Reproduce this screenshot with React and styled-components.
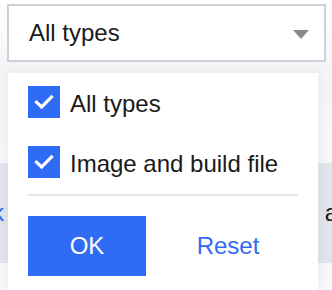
import styled, { createGlobalStyle } from 'styled-components';

const GlobalStyle = createGlobalStyle`
  html, body {
    margin: 0;
    padding: 0;
    background: #f7f8fa;
    font-family: "Liberation Sans", Arial, sans-serif;
    overflow: hidden;
  }
`;

const Page = styled.div`
  width: 332px;
  height: 290px;
  padding: 4px 6px 0 7px;
  box-sizing: border-box;
  position: relative;
  overflow: hidden;
  background: linear-gradient(#ffffff 0px, #f4f5f7 70px, #f7f8fa 160px);
`;

const Select = styled.div`
  height: 58px;
  box-sizing: border-box;
  border: 2px solid #ccd0d9;
  background: #fff;
  display: flex;
  align-items: center;
  justify-content: space-between;
  padding: 0 15px 0 20px;
  font-size: 24px;
  color: #1a1a1a;
`;

const Arrow = styled.span`
  width: 0;
  height: 0;
  border-left: 8px solid transparent;
  border-right: 8px solid transparent;
  border-top: 9px solid #8a8a8a;
  margin-top: 2px;
`;

const Behind = styled.div`
  margin: 101px -6px 0 -7px;
`;

const TableRow = styled.div`
  height: 100px;
  background: #e2e5ec;
  display: flex;
  align-items: center;
  justify-content: space-between;
  font-size: 24px;
  overflow: hidden;
`;

const Cell = styled.span`
  color: ${({ $link }) => ($link ? '#2f6bf5' : '#1a1a1a')};
  margin: ${({ $link }) => ($link ? '0 0 0 -8px' : '0 -6px 0 0')};
`;

const Menu = styled.div`
  position: absolute;
  left: 8px;
  top: 73px;
  width: 310px;
  height: 217px;
  box-sizing: border-box;
  background: #fff;
  box-shadow: 0 0 14px rgba(30, 40, 60, 0.07);
  padding: 13px 20px 0;
`;

const Option = styled.label`
  display: flex;
  align-items: center;
  gap: 10px;
  height: 32px;
  margin-bottom: ${({ $last }) => ($last ? '16px' : '28px')};
  font-size: 24px;
  color: #1a1a1a;
`;

const OptionText = styled.span`
  margin-top: 3px;
`;

const Box = styled.span`
  width: 32px;
  height: 32px;
  background: #2f6bf5;
  display: flex;
  align-items: center;
  justify-content: center;
  flex-shrink: 0;
`;

const Divider = styled.div`
  height: 2px;
  background: #e4e7ec;
  margin-bottom: 20px;
`;

const Actions = styled.div`
  display: flex;
  gap: 23px;
`;

const Button = styled.button`
  width: 118px;
  height: 60px;
  border: none;
  font-family: inherit;
  font-size: 24px;
  cursor: pointer;
  background: ${({ $primary }) => ($primary ? '#2f6bf5' : 'transparent')};
  color: ${({ $primary }) => ($primary ? '#fff' : '#2f6bf5')};
  padding: 0;
`;

function Check() {
  return (
    <svg width="20" height="16" viewBox="0 0 20 16">
      <path d="M2.5 8.2 L7.6 13 L17.5 3" fill="none" stroke="#fff" strokeWidth="3.2" strokeLinecap="square" />
    </svg>
  );
}

export default function App() {
  return (
    <Page>
      <GlobalStyle />
      <Select>
        <span>All types</span>
        <Arrow />
      </Select>
      <Behind>
        <TableRow>
          <Cell $link>k</Cell>
          <Cell>a</Cell>
        </TableRow>
      </Behind>
      <Menu>
        <Option>
          <Box><Check /></Box>
          <OptionText>All types</OptionText>
        </Option>
        <Option $last>
          <Box><Check /></Box>
          <OptionText>Image and build file</OptionText>
        </Option>
        <Divider />
        <Actions>
          <Button $primary>OK</Button>
          <Button>Reset</Button>
        </Actions>
      </Menu>
    </Page>
  );
}
